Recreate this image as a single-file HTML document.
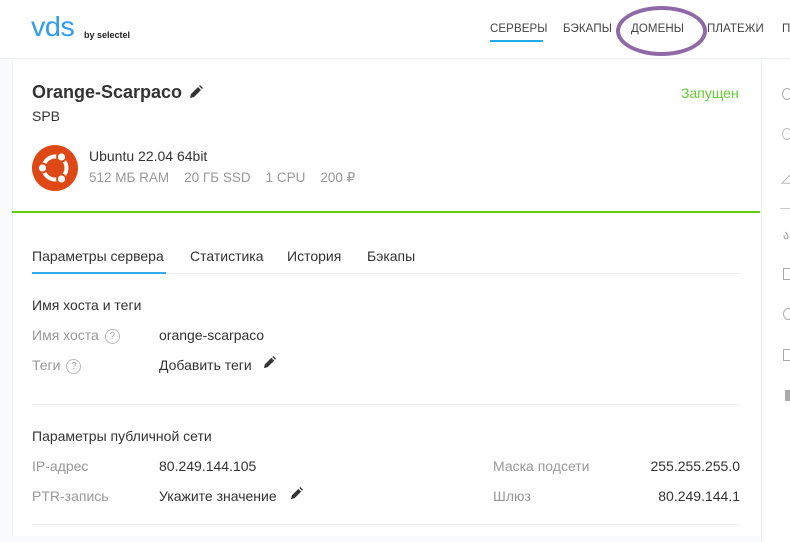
<!DOCTYPE html>
<html><head><meta charset="utf-8"><style>
*{margin:0;padding:0;box-sizing:border-box}
body{width:790px;height:542px;overflow:hidden;background:#fafbfc;font-family:"Liberation Sans","Noto Sans CJK SC",sans-serif;color:#333;position:relative}
.a{position:absolute;white-space:nowrap}
.hdr{position:absolute;left:0;top:0;width:790px;height:59px;background:#fff;border-bottom:1px solid #f0f1f3}
.card{position:absolute;left:12px;top:60px;width:748px;height:476px;background:#fff;border-left:1px solid #f0f1f3}
.side{position:absolute;left:761px;top:60px;width:29px;height:482px;background:#fff;border-left:1px solid #f0f1f3}
.nav{font-size:11.5px;color:#444;top:23px;letter-spacing:0.1px}
.g{color:#999;font-size:14px}
.v{color:#333;font-size:14px}
.q{display:inline-block;width:15px;height:15px;border:1px solid #bbb;border-radius:50%;font-size:10px;color:#aaa;text-align:center;line-height:13px;vertical-align:1px;margin-left:6px}
</style></head><body>
<div class="hdr"></div>
<div class="a" style="left:31px;top:11px;font-size:28px;color:#2f9cf0;letter-spacing:-0.5px;transform:scaleX(1.03);transform-origin:left">vds</div>
<div class="a" style="left:84px;top:30px;font-size:9px;color:#222;font-weight:bold">by selectel</div>
<div class="a nav" style="left:490px">СЕРВЕРЫ</div>
<div class="a" style="left:490px;top:40px;width:53px;height:2px;background:#22aaee"></div>
<div class="a nav" style="left:563px">БЭКАПЫ</div>
<div class="a nav" style="left:631px">ДОМЕНЫ</div>
<div class="a nav" style="left:707px">ПЛАТЕЖИ</div>
<div class="a nav" style="left:782px">П</div>
<div class="a" style="left:616px;top:6px;width:91px;height:50px;border:4px solid #8f68a8;border-radius:50%"></div>
<div class="card"></div>
<div class="side"></div>
<div class="a" style="left:32px;top:82px;font-size:18px;font-weight:bold;color:#333">Orange-Scarpaco</div>
<svg class="a" style="left:189px;top:85px" width="14" height="14" viewBox="0 0 14 14"><path d="M1 13l1-4 7-7 3 3-7 7z M10 1l3 3 1-1-3-3z" fill="#333"/></svg>
<div class="a" style="left:32px;top:108px;font-size:14px">SPB</div>
<div class="a" style="left:681px;top:85px;font-size:14px;color:#66cc33">Запущен</div>
<svg class="a" style="left:32px;top:145px" width="46" height="46" viewBox="0 0 46 46"><circle cx="23" cy="23" r="23" fill="#dd4814"/><circle cx="23" cy="23" r="11.5" fill="none" stroke="#fff" stroke-width="4"/><circle cx="10.5" cy="23" r="4.5" fill="#fff" stroke="#dd4814" stroke-width="1.8"/><circle cx="29.5" cy="12" r="4.5" fill="#fff" stroke="#dd4814" stroke-width="1.8"/><circle cx="29.5" cy="34" r="4.5" fill="#fff" stroke="#dd4814" stroke-width="1.8"/></svg>
<div class="a" style="left:89px;top:148px;font-size:14px;color:#333">Ubuntu 22.04 64bit</div>
<div class="a g" style="left:89px;top:170px;font-size:13.5px">512 МБ RAM&nbsp;&nbsp;&nbsp; 20 ГБ SSD&nbsp;&nbsp;&nbsp; 1 CPU&nbsp;&nbsp;&nbsp; 200 ₽</div>
<div class="a" style="left:12px;top:211px;width:748px;height:2px;background:#66cc11"></div>
<div class="a v" style="left:32px;top:248px">Параметры сервера</div>
<div class="a v" style="left:190px;top:248px">Статистика</div>
<div class="a v" style="left:287px;top:248px">История</div>
<div class="a v" style="left:367px;top:248px">Бэкапы</div>
<div class="a" style="left:32px;top:273px;width:708px;height:1px;background:#eef0f2"></div>
<div class="a" style="left:32px;top:272px;width:134px;height:2px;background:#33aaee"></div>
<div class="a v" style="left:32px;top:297px">Имя хоста и теги</div>
<div class="a g" style="left:32px;top:327px">Имя хоста<span class="q">?</span></div>
<div class="a v" style="left:159px;top:327px">orange-scarpaco</div>
<div class="a g" style="left:32px;top:357px">Теги<span class="q">?</span></div>
<div class="a v" style="left:159px;top:357px">Добавить теги</div>
<svg class="a" style="left:263px;top:356px" width="13" height="13" viewBox="0 0 14 14"><path d="M1 13l1-4 7-7 3 3-7 7z M10 1l3 3 1-1-3-3z" fill="#333"/></svg>
<div class="a" style="left:32px;top:404px;width:708px;height:1px;background:#eef0f2"></div>
<div class="a v" style="left:32px;top:428px">Параметры публичной сети</div>
<div class="a g" style="left:32px;top:458px">IP-адрес</div>
<div class="a v" style="left:159px;top:458px">80.249.144.105</div>
<div class="a g" style="left:32px;top:488px">PTR-запись</div>
<div class="a v" style="left:159px;top:488px">Укажите значение</div>
<svg class="a" style="left:290px;top:487px" width="13" height="13" viewBox="0 0 14 14"><path d="M1 13l1-4 7-7 3 3-7 7z M10 1l3 3 1-1-3-3z" fill="#333"/></svg>
<div class="a g" style="left:493px;top:458px">Маска подсети</div>
<div class="a v" style="right:50px;top:458px">255.255.255.0</div>
<div class="a g" style="left:493px;top:488px">Шлюз</div>
<div class="a v" style="right:50px;top:488px">80.249.144.1</div>
<div class="a" style="left:32px;top:524px;width:708px;height:1px;background:#eef0f2"></div>
<div class="a" style="left:782px;top:88px;width:10px;height:12px;border:1.5px solid #aaa;border-radius:50%"></div>
<div class="a" style="left:782px;top:128px;width:10px;height:12px;border:1.5px solid #bbb;border-radius:50%"></div>
<div class="a" style="left:781px;top:170px;font-size:13px;color:#aaa">◿</div>
<div class="a" style="left:780px;top:208px;width:10px;height:1px;background:#ccc"></div>
<div class="a" style="left:783px;top:228px;font-size:12px;color:#999">ა</div>
<div class="a" style="left:783px;top:268px;width:8px;height:12px;border:1.5px solid #aaa"></div>
<div class="a" style="left:783px;top:308px;width:10px;height:12px;border:1.5px solid #aaa;border-radius:50%"></div>
<div class="a" style="left:783px;top:349px;width:8px;height:12px;border:1.5px solid #aaa"></div>
<div class="a" style="left:785px;top:390px;width:6px;height:11px;background:#aaa"></div>
</body></html>
